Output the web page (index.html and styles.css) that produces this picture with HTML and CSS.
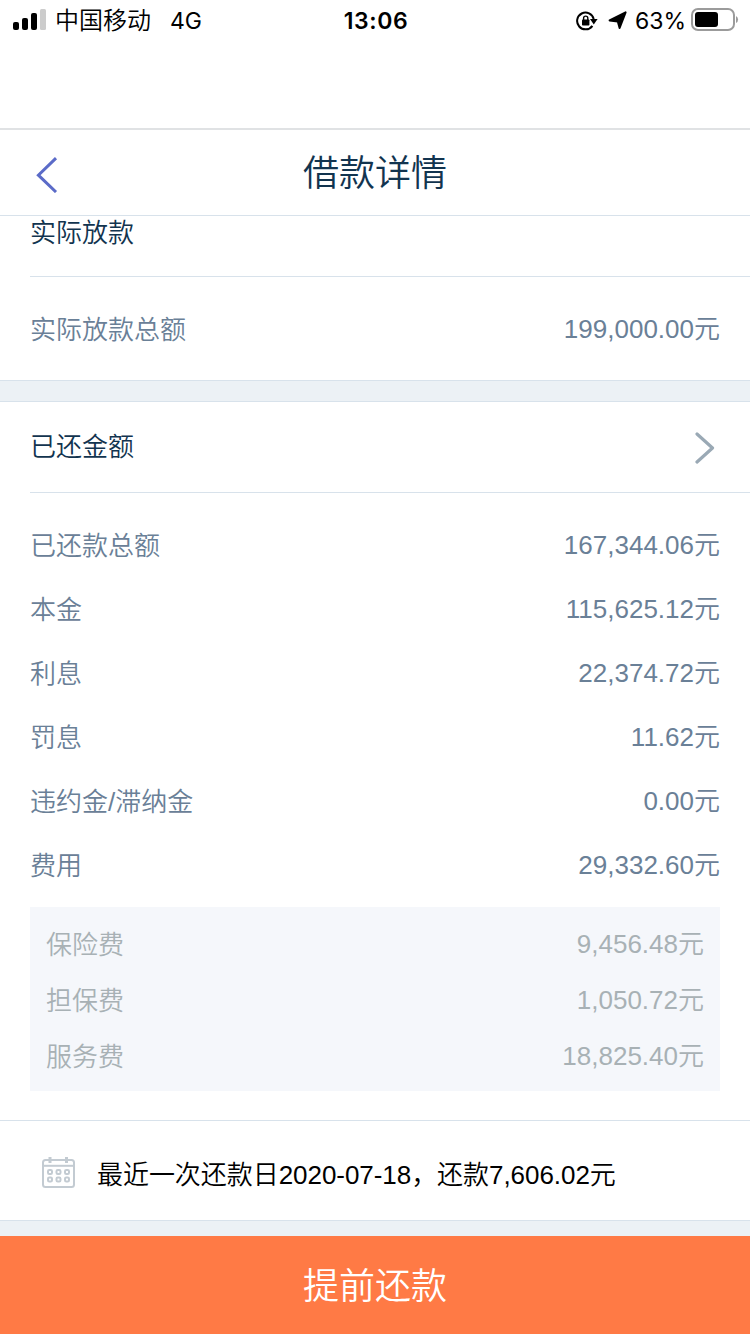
FILE: index.html
```
<!DOCTYPE html>
<html lang="zh-CN">
<head>
<meta charset="utf-8" />
<meta name="viewport" content="width=device-width,initial-scale=1" />
<title>借款详情</title>
<link rel="stylesheet" href="styles.css">
</head>
<body>
<div class="status">
  <div class="status-left">
    <svg class="signal" width="33" height="22" viewBox="0 0 33 22">
      <rect x="0" y="13" width="6" height="8" rx="2"/>
      <rect x="9" y="9" width="6" height="12" rx="2"/>
      <rect x="18" y="4" width="6" height="17" rx="2"/>
      <rect x="27" y="0" width="6" height="21" rx="1.5" fill="#ccc"/>
    </svg>
    <span class="carrier">中国移动</span>
    <span class="network">4G</span>
  </div>
  <div class="time">13:06</div>
  <div class="status-right">
    <svg class="lock" width="22" height="20" viewBox="0 0 22 20">
      <path d="M16.4 14.8A8.4 8.4 0 1 1 17.7 8" fill="none" stroke="#000" stroke-width="2"/>
      <path d="M14 8H21.6L17.8 13.500Z"/>
      <rect x="6" y="8.500" width="7.400" height="6" rx="0.800"/>
      <path d="M7.600 9V7.200a2.100 2.100 0 0 1 4.200 0V9" fill="none" stroke="#000" stroke-width="1.400"/>
    </svg>
    <svg class="arrow" width="19" height="19" viewBox="0 0 19 19">
      <path d="M17.600 1.400L11.600 17L9.800 10.600L1.600 9.500Z" stroke="#000" stroke-width="2" stroke-linejoin="round"/>
    </svg>
    <span class="percent">63%</span>
    <svg class="battery" width="48" height="23" viewBox="0 0 48 23">
      <rect x="1" y="1" width="42" height="21" rx="6" fill="none" stroke="#9b9b9b" stroke-width="2"/>
      <rect x="4" y="4" width="23" height="15" rx="3"/>
      <path d="M45 8a4 4 0 0 1 0 7Z" fill="#9b9b9b"/>
    </svg>
  </div>
</div>

<header class="header">
  <svg class="back" width="22" height="36" viewBox="0 0 22 36">
    <path d="M20 1.200L2.400 18.200L20 35" fill="none" stroke="#5b6bc8" stroke-width="3"/>
  </svg>
  <h1>借款详情</h1>
</header>

<main class="content">
  <section class="card card-first">
    <div class="card-title">实际放款</div>
    <div class="list">
      <div class="row"><span>实际放款总额</span><span class="amount">199,000.00元</span></div>
    </div>
  </section>

  <section class="card card-paid">
    <div class="card-title">
      已还金额
      <svg class="more" width="20" height="32" viewBox="0 0 20 32">
        <path d="M2 2L17.500 16L2 30" fill="none" stroke="#9aa9b5" stroke-width="3.2" stroke-linecap="round" stroke-linejoin="round"/>
      </svg>
    </div>
    <div class="list">
      <div class="row"><span>已还款总额</span><span class="amount">167,344.06元</span></div>
      <div class="row"><span>本金</span><span class="amount">115,625.12元</span></div>
      <div class="row"><span>利息</span><span class="amount">22,374.72元</span></div>
      <div class="row"><span>罚息</span><span class="amount">11.62元</span></div>
      <div class="row"><span>违约金/滞纳金</span><span class="amount">0.00元</span></div>
      <div class="row"><span>费用</span><span class="amount">29,332.60元</span></div>
      <div class="fees">
        <div class="row"><span>保险费</span><span class="amount">9,456.48元</span></div>
        <div class="row"><span>担保费</span><span class="amount">1,050.72元</span></div>
        <div class="row"><span>服务费</span><span class="amount">18,825.40元</span></div>
      </div>
    </div>
  </section>

  <div class="last-pay">
    <svg class="calendar" width="33" height="31" viewBox="0 0 33 31">
      <g fill="none" stroke="#c3cbd2" stroke-width="2">
        <rect x="1" y="3" width="31" height="27" rx="2.500"/>
        <path d="M1 8.800H32"/>
        <path d="M8 0V6M24.500 0V6" stroke-width="3"/>
        <rect x="6" y="13" width="4" height="4" rx="1.300"/>
        <rect x="14.500" y="13" width="4" height="4" rx="1.300"/>
        <rect x="23" y="13" width="4" height="4" rx="1.300"/>
        <rect x="6" y="20.500" width="4" height="4" rx="1.300"/>
        <rect x="14.500" y="20.500" width="4" height="4" rx="1.300"/>
        <rect x="23" y="20.500" width="4" height="4" rx="1.300"/>
      </g>
    </svg>
    <span>最近一次还款日2020-07-18，还款7,606.02元</span>
  </div>
</main>

<button type="button" class="repay">提前还款</button>
</body>
</html>
```

FILE: styles.css
```
*{box-sizing:border-box;}
body{margin:0;width:750px;height:1334px;display:flex;flex-direction:column;overflow:hidden;background:#ecf1f5;font-family:"Liberation Sans","Noto Sans CJK SC",sans-serif;font-size:26px;font-weight:350;color:#000;}
svg{display:block;flex:none;}

/* status bar */
.status{height:128px;padding:0 11px 0 13px;display:grid;grid-template-columns:1fr auto 1fr;align-items:start;background:#fff;font-family:Inter,"Noto Sans CJK SC",sans-serif;font-size:23px;font-weight:400;line-height:42px;}
.status-left,.status-right{display:flex;}
.status-right{justify-content:flex-end;}
.signal{margin-top:9px;}
.carrier{margin-left:9px;font-size:24px;font-weight:350;}
.network{margin-left:19px;}
.time{font-weight:600;letter-spacing:.6px;}
.lock{margin:11px 10px 0 0;}
.arrow{margin:11px 8px 0 0;}
.percent{margin-right:5px;}
.battery{margin-top:8px;}

.header{height:88px;padding-left:36px;display:grid;grid-template-columns:36px 1fr 72px;align-items:center;background:#fff;border-top:2px solid #e0e2e4;border-bottom:1px solid #d8e2eb;}
.header h1{margin:2px 0 0;font-size:36px;font-weight:350;line-height:80px;text-align:center;color:#12344f;}
.back{margin-top:4px;}

.content{flex:1;overflow:hidden;}
.card{background:#fff;border-bottom:1px solid #d8e2eb;}
.card-first{margin-top:-30px;}
.card-paid{margin-top:20px;border-top:1px solid #d8e2eb;}
.card-title{height:91px;margin-left:30px;padding:0 35px 1px 0;display:flex;align-items:center;justify-content:space-between;border-bottom:1px solid #d8e2eb;color:#12344f;}
.card-paid .card-title{padding-bottom:5px;}
.more{margin-top:6px;}
.list{padding:18px 30px 21px;}
.card-paid .list{padding-bottom:29px;}
.row{height:64px;display:flex;align-items:center;justify-content:space-between;color:#6a8097;}
.amount{padding-bottom:2px;}
.fees{margin-top:12px;padding:7px 16px 9px;background:#f5f7fb;}
.fees .row{height:56px;color:#a8b1b5;}

.last-pay{height:100px;padding:4px 42px 0;display:flex;align-items:center;gap:22px;background:#fff;border-bottom:1px solid #d8e2eb;}
.last-pay span{letter-spacing:-.05px;}

.repay{height:98px;padding:0 0 5px;border:0;background:#ff7a45;color:#fff;font:inherit;font-size:36px;}
```
